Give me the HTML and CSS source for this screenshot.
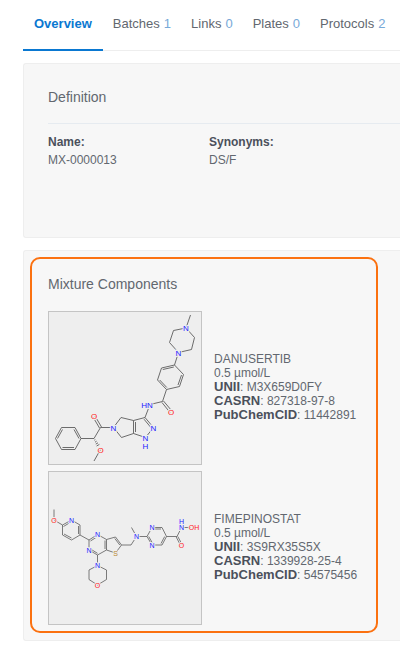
FILE: index.html
```
<!DOCTYPE html>
<html lang="en">
<head>
    <meta charset="UTF-8">
    <meta name="viewport" content="width=device-width, initial-scale=1">
    <title>MX-0000013</title>
    <link rel="stylesheet" href="styles.css">
</head>
<body>
    <nav class="tabs">
        <a href="#overview" class="tab active">Overview</a>
        <a href="#batches" class="tab">Batches <span class="count">1</span></a>
        <a href="#links" class="tab">Links <span class="count">0</span></a>
        <a href="#plates" class="tab">Plates <span class="count">0</span></a>
        <a href="#protocols" class="tab">Protocols <span class="count">2</span></a>
    </nav>

    <main id="overview">
        <section class="panel definition">
            <h2>Definition</h2>
            <dl class="fields">
                <div>
                    <dt>Name:</dt>
                    <dd>MX-0000013</dd>
                </div>
                <div>
                    <dt>Synonyms:</dt>
                    <dd>DS/F</dd>
                </div>
            </dl>
        </section>

        <section class="panel mixture">
            <div class="highlight">
                <h2>Mixture Components</h2>

                <div class="component">
                    <svg class="structure" viewBox="0 0 152 152" role="img" aria-label="Danusertib structure">
                        <g class="bonds">
                            <!-- methylpiperazine -->
                            <path d="M141.5 3L137 16L145.5 25.5L142.5 37.5L129.5 40.5L120.5 30.5L124.5 18.5L137 16M129.5 40.5L125.5 53"/>
                            <!-- benzamide -->
                            <path d="M125.5 53L134.5 62.5L130.5 74.5L117.5 77.5L108.5 68L112.5 56ZM132.5 63L129 73M117.8 75.5L110.7 68M113.8 57.5L124.8 55"/>
                            <path d="M117.5 77.5L113.5 89.5L101 92.5L96 105.5M113 90.5L121 100.5M114.5 89L122.5 98.5"/>
                            <!-- pyrrolopyrazole -->
                            <path d="M96 105.5L104.5 115.5L96.5 125.5L84.5 121.5V108.5ZM95 107.2L102.3 116M86.5 110V120M84.5 108.5L72 105.5L64.5 115.5L72.5 125.5L84.5 121.5"/>
                            <path d="M64.5 115.5H51.5L45 126.5H32M50.5 116L44 105M52.5 115L46 104"/>
                            <path d="M32 126.5L26 115.5H12.5L6.5 126.5L12.5 137.5H26ZM30 126.5L25 117.5M13.5 117.5L8.5 126.5M13.5 135.5H25"/>
                            <path d="M51.5 137.5L45 149M46.3 127.6L45.3 128.2M47.6 129.2L46 130.2M49 130.8L46.8 132.1M50.4 132.4L47.6 134"/>
                        </g>
                        <g class="atoms">
                            <text class="n" x="137" y="19">N</text>
                            <text class="n" x="129.5" y="43.5">N</text>
                            <text class="o" x="122" y="102.5">O</text>
                            <text class="n" x="98" y="95.5">HN</text>
                            <text class="n" x="104.5" y="118.5">N</text>
                            <text class="n" x="96.5" y="128.5">N</text>
                            <text class="n" x="96.5" y="136.5">H</text>
                            <text class="n" x="64.5" y="118.5">N</text>
                            <text class="o" x="45" y="107">O</text>
                            <text class="o" x="51.5" y="140.5">O</text>
                        </g>
                    </svg>
                    <div class="details">
                        <div>DANUSERTIB</div>
                        <div>0.5 µmol/L</div>
                        <div><b>UNII</b>: M3X659D0FY</div>
                        <div><b>CASRN</b>: 827318-97-8</div>
                        <div><b>PubChemCID</b>: 11442891</div>
                    </div>
                </div>

                <div class="component">
                    <svg class="structure small" viewBox="0 0 152 152" role="img" aria-label="Fimepinostat structure">
                        <g class="bonds">
                            <!-- methoxypyridine -->
                            <path d="M5 37.5V48L13.5 53L22.5 48L31 53V63L22.5 68L13.5 63V53M14.5 54.5L22 50M29.5 54V62M22.5 66L15 62M31 63L40 68"/>
                            <!-- thienopyrimidine -->
                            <path d="M40 68L48.5 62.5L57.5 67.5V78L48.5 83L40 78ZM41.5 69L48.5 64.5M56 68.5V77M48.5 81.3L41.5 77"/>
                            <path d="M57.5 67.5L66.5 65L72.5 73L66.5 81L57.5 78M65.8 66.5L70.8 73"/>
                            <!-- morpholine -->
                            <path d="M48.5 83V93.5L57.5 98V107.5L48.5 113L40 107.5V98L48.5 93.5"/>
                            <path d="M72.5 73H82L87.5 64.5L82.5 55.5M87.5 64.5H98"/>
                            <!-- pyrimidine -->
                            <path d="M98 64.5L103 55.5H113L117.5 64.5L113 73H103ZM103 57H112M99.7 64.5L104 72M115.7 64.5L112 71.5"/>
                            <!-- hydroxamic acid -->
                            <path d="M117.5 64.5H128L132.5 55.5H142M127.2 65L131.7 73.5M128.8 64.5L133.3 73"/>
                        </g>
                        <g class="atoms">
                            <text class="o" x="5" y="50.5">O</text>
                            <text class="n" x="22.5" y="50.5">N</text>
                            <text class="n" x="48.5" y="65">N</text>
                            <text class="n" x="40" y="80.5">N</text>
                            <text class="s" x="66.5" y="83.5">S</text>
                            <text class="n" x="48.5" y="96">N</text>
                            <text class="o" x="48.5" y="115.5">O</text>
                            <text class="n" x="87.5" y="67">N</text>
                            <text class="n" x="103" y="58">N</text>
                            <text class="n" x="103" y="75.5">N</text>
                            <text class="o" x="132.5" y="75.5">O</text>
                            <text class="n" x="132.5" y="58">N</text>
                            <text class="n" x="132.5" y="52">H</text>
                            <text class="o" x="145" y="58">OH</text>
                        </g>
                    </svg>
                    <div class="details">
                        <div>FIMEPINOSTAT</div>
                        <div>0.5 µmol/L</div>
                        <div><b>UNII</b>: 3S9RX35S5X</div>
                        <div><b>CASRN</b>: 1339928-25-4</div>
                        <div><b>PubChemCID</b>: 54575456</div>
                    </div>
                </div>
            </div>
        </section>
    </main>
</body>
</html>
```
FILE: styles.css
```
:root {
    --text-color: #62676f;
    --strong-color: #4b505b;
    --primary-color: #0a78d1;
    --panel-color: #f7f7f7;
    --line-color: #eeeeee;
    --highlight-color: #fb7110;
}

* {
    box-sizing: border-box;
}

body {
    margin: 0;
    padding-left: 23px;
    background: #ffffff;
    color: var(--text-color);
    font-family: "Liberation Sans", Arial, sans-serif;
    font-size: 12px;
}

.tabs {
    display: flex;
    height: 51px;
    border-bottom: 1px solid var(--line-color);
    white-space: nowrap;
}

.tab {
    display: flex;
    gap: 4px;
    height: 51px;
    padding: 0 10px;
    font-size: 13px;
    line-height: 48px;
    color: var(--text-color);
    text-decoration: none;
}

.tab.active {
    padding: 0 11px;
    border-bottom: 2px solid var(--primary-color);
    color: var(--primary-color);
    font-weight: bold;
}

.count {
    color: #78a9d8;
}

.panel {
    margin-top: 12px;
    border: 1px solid var(--line-color);
    border-right: 0;
    border-radius: 3px 0 0 3px;
    background: var(--panel-color);
}

h2 {
    margin: 0;
    font-size: 14px;
    font-weight: normal;
    line-height: 20px;
}

.definition {
    min-height: 175px;
    padding: 23px 0 24px 24px;
}

.fields {
    display: grid;
    grid-template-columns: 161px 1fr;
    margin: 16px 0 0;
    padding-top: 9px;
    border-top: 1px solid #e6ebf0;
    line-height: 18px;
}

dt {
    color: var(--strong-color);
    font-weight: bold;
}

dd {
    margin: 0;
}

.mixture {
    padding: 6px 22px 7px 6px;
}

.highlight {
    display: flex;
    flex-direction: column;
    gap: 6px;
    padding: 15px 16px 6px;
    border: 2px solid var(--highlight-color);
    border-radius: 10px;
}

.highlight h2 {
    margin-bottom: 11px;
}

.component {
    display: flex;
    align-items: center;
    gap: 12px;
}

.structure {
    flex: none;
    width: 154px;
    height: 154px;
    border: 1px solid #c4c4c4;
    background: #eeeeee;
}

.bonds {
    fill: none;
    stroke: #5c5c5c;
    stroke-width: 0.9;
    stroke-linejoin: round;
}

/* the halo hides the bond ends under each letter */
.atoms {
    font-size: 8px;
    text-anchor: middle;
    stroke: #eeeeee;
    stroke-width: 2;
    paint-order: stroke;
}

.small .bonds {
    stroke-width: 0.8;
}

.small .atoms {
    font-size: 7px;
}

.n {
    fill: #1a1aff;
}

.o {
    fill: #ff1a1a;
}

.s {
    fill: #b8862f;
}

.details {
    padding-bottom: 2px;
    line-height: 14px;
    white-space: nowrap;
}

.details b {
    color: var(--strong-color);
    font-size: 13px;
}
```
